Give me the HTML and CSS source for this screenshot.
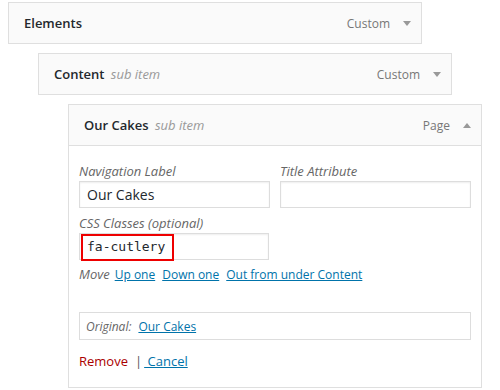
FILE: index.html
```html
<!DOCTYPE html>
<html lang="en">
<head>
    <meta charset="UTF-8">
    <title>Menu Items</title>
    <link rel="stylesheet" href="styles.css">
</head>
<body>
    <div class="menu">
        <div class="item">
            <div class="handle">
                <span class="title">Elements</span>
                <span class="controls"><span class="type">Custom</span><span class="arrow down"></span></span>
            </div>
        </div>

        <div class="item depth-1">
            <div class="handle">
                <span class="title">Content <span class="sub">sub item</span></span>
                <span class="controls"><span class="type">Custom</span><span class="arrow down"></span></span>
            </div>
        </div>

        <div class="item depth-2">
            <div class="handle">
                <span class="title">Our Cakes <span class="sub">sub item</span></span>
                <span class="controls"><span class="type">Page</span><span class="arrow up"></span></span>
            </div>
            <div class="settings">
                <div class="row">
                    <div class="field">
                        <div class="label">Navigation Label</div>
                        <div class="input">Our Cakes</div>
                    </div>
                    <div class="field">
                        <div class="label">Title Attribute</div>
                        <div class="input"></div>
                    </div>
                </div>
                <div class="field classes">
                    <div class="label">CSS Classes (optional)</div>
                    <div class="input code">fa-cutlery<span class="mark"></span></div>
                </div>
                <div class="move">
                    <span class="label">Move</span>
                    <a href="#">Up one</a>
                    <a href="#">Down one</a>
                    <a href="#">Out from under Content</a>
                </div>
                <div class="original">
                    <span class="label">Original:</span>
                    <a href="#">Our Cakes</a>
                </div>
                <div class="actions">
                    <a href="#" class="remove">Remove</a><span class="sep">|</span><a href="#" class="cancel">&nbsp;Cancel</a>
                </div>
            </div>
        </div>
    </div>
</body>
</html>
```

FILE: styles.css
```css
body {
    margin: 0;
    padding: 2px 0 0 8px;
    font-family: "Open Sans", sans-serif;
    font-size: 13px;
    color: #23282d;
    background: white;
}
a {
    color: #0073aa;
    text-decoration: underline;
}
.item {
    width: 414px;
    margin-bottom: 9px;
}
.depth-1 {
    margin-left: 30px;
}
.depth-2 {
    margin-left: 60px;
}
.handle {
    display: flex;
    justify-content: space-between;
    align-items: center;
    height: 42px;
    box-sizing: border-box;
    padding: 0 10px 0 15px;
    border: 1px solid #dfdfdf;
    background: #fafafa;
}
.title {
    font-weight: 600;
}
.sub {
    margin-left: 3px;
    font-style: italic;
    font-weight: 400;
    color: #999;
}
.controls {
    display: flex;
    align-items: center;
    gap: 13px;
    font-size: 12px;
    color: #777;
}
.arrow {
    width: 0;
    height: 0;
    border-left: 4px solid transparent;
    border-right: 4px solid transparent;
}
.arrow.down {
    border-top: 5px solid #999;
}
.arrow.up {
    border-bottom: 5px solid #999;
}
.settings {
    border: 1px solid #dfdfdf;
    border-top: none;
    padding: 16px 10px 17px;
}
.label {
    font-style: italic;
    color: #666;
}
.field .label {
    line-height: 19px;
}
.row {
    display: grid;
    grid-template-columns: 1fr 1fr;
    gap: 10px;
    margin-bottom: 6px;
}
.input {
    position: relative;
    height: 27px;
    box-sizing: border-box;
    padding: 0 7px;
    border: 1px solid #ddd;
    box-shadow: inset 0 1px 2px rgba(0, 0, 0, 0.07);
    font-size: 14px;
    line-height: 25px;
    background: white;
}
.classes {
    width: 190px;
}
.code {
    font-family: "DejaVu Sans Mono", monospace;
    font-size: 13px;
}
.mark {
    position: absolute;
    left: 1px;
    top: 0;
    width: 93px;
    height: 27px;
    box-sizing: border-box;
    border: 2px solid #ee0000;
}
.move {
    display: flex;
    align-items: baseline;
    gap: 7px;
    margin-top: 5px;
    line-height: 18px;
}
.move .label {
    margin-right: -2px;
}
.move a {
    font-size: 12px;
}
.original {
    display: flex;
    align-items: center;
    gap: 7px;
    height: 28px;
    box-sizing: border-box;
    margin-top: 28px;
    padding: 0 6px;
    border: 1px solid #ddd;
    font-size: 12px;
}
.actions {
    margin-top: 12px;
    line-height: 18px;
}
.remove {
    color: #a00;
    text-decoration: none;
}
.sep {
    margin: 0 2px 0 7px;
    color: #555;
}
```
